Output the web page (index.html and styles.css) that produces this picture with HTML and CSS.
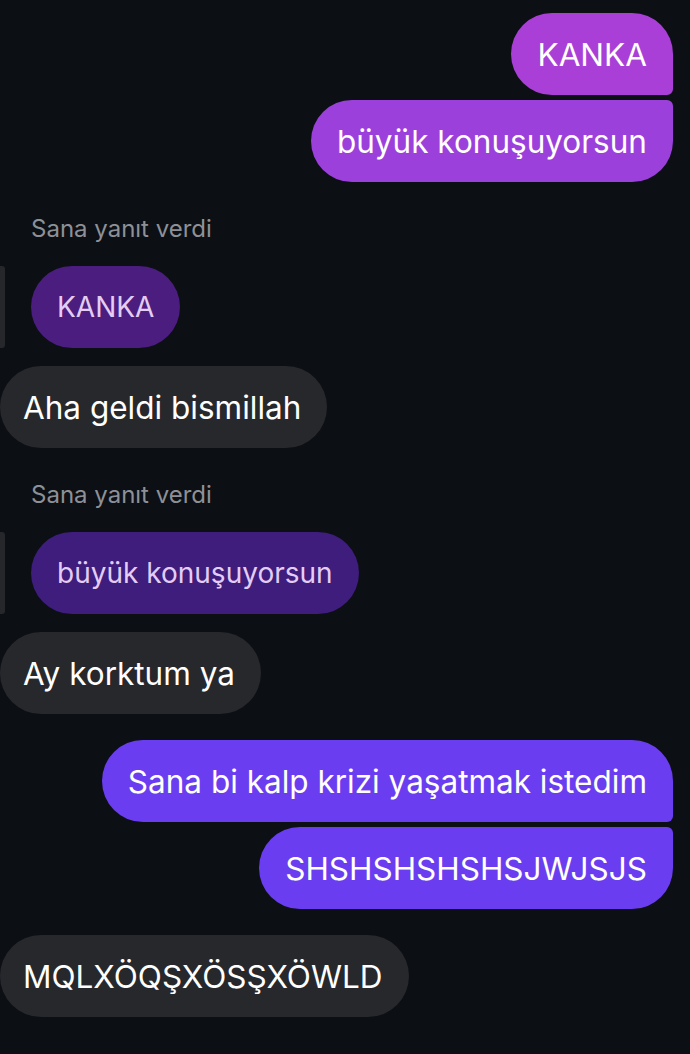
FILE: index.html
```html
<!DOCTYPE html>
<html lang="tr">
<head>
  <meta charset="UTF-8" />
  <meta name="viewport" content="width=device-width, initial-scale=1.0" />
  <title>Sohbet</title>
  <link rel="stylesheet" href="styles.css">
</head>
<body>

  <!-- Mesajlar -->
  <div class="chat">

    <div class="group out">
      <div class="bubble sent pink first">KANKA</div>
      <div class="bubble sent violet last">büyük konuşuyorsun</div>
    </div>

    <div class="group in">
      <div class="reply-label">Sana yanıt verdi</div>
      <div class="quote">
        <div class="quote-bar"></div>
        <div class="bubble quoted plum">KANKA</div>
      </div>
      <div class="bubble received">Aha geldi bismillah</div>
    </div>

    <div class="group in">
      <div class="reply-label">Sana yanıt verdi</div>
      <div class="quote">
        <div class="quote-bar"></div>
        <div class="bubble quoted indigo">büyük konuşuyorsun</div>
      </div>
      <div class="bubble received">Ay korktum ya</div>
    </div>

    <div class="group out">
      <div class="bubble sent blue first">Sana bi kalp krizi yaşatmak istedim</div>
      <div class="bubble sent blue last">SHSHSHSHSHSJWJSJS</div>
    </div>

    <div class="group in">
      <div class="bubble received">MQLXÖQŞXÖSŞXÖWLD</div>
    </div>

  </div>

</body>
</html>
```

FILE: styles.css
```css
body {
  margin: 0;
  background-color: #0c0f14;
  font-family: 'Inter', 'Liberation Sans', sans-serif;
  height: 1054px;
  overflow: hidden;
}

.chat {
  display: flex;
  flex-direction: column;
  padding: 13px 17px 0 0;
}

/* Grupos de mensajes */
.group {
  display: flex;
  flex-direction: column;
  gap: 5px;
}

.group.out {
  align-items: flex-end;
}

.group.in {
  align-items: flex-start;
}

.group.out + .group.in {
  margin-top: 34px;
}

.group.in + .group.in {
  margin-top: 34px;
}

.group.in + .group.out,
.group.out + .group.in:last-child {
  margin-top: 26px;
}

/* Burbujas */
.bubble {
  box-sizing: border-box;
  height: 82px;
  display: flex;
  align-items: center;
  padding: 0 26px;
  font-size: 31.5px;
  color: #fff;
  border-radius: 41px;
  white-space: nowrap;
}

.sent.first {
  border-radius: 41px 41px 6px 41px;
}

.sent.last {
  border-radius: 41px 6px 41px 41px;
}

.pink {
  background: #a93fd6;
}

.violet {
  background: #9c40db;
}

.blue {
  background: #6a3ef0;
}

.received {
  background: #26282c;
  padding-left: 23px;
}

/* Respuesta citada */
.reply-label {
  font-size: 24px;
  line-height: 26px;
  color: #8d9197;
  margin-left: 31px;
  margin-bottom: 19px;
}

.quote {
  display: flex;
  gap: 26px;
  margin-bottom: 13px;
}

.quote-bar {
  width: 5px;
  background: #25272b;
  border-radius: 0 3px 3px 0;
}

.quoted {
  font-size: 28px;
  color: #e4cdf4;
}

.plum {
  background: #4a1d7e;
}

.indigo {
  background: #3e1d7c;
}
```
